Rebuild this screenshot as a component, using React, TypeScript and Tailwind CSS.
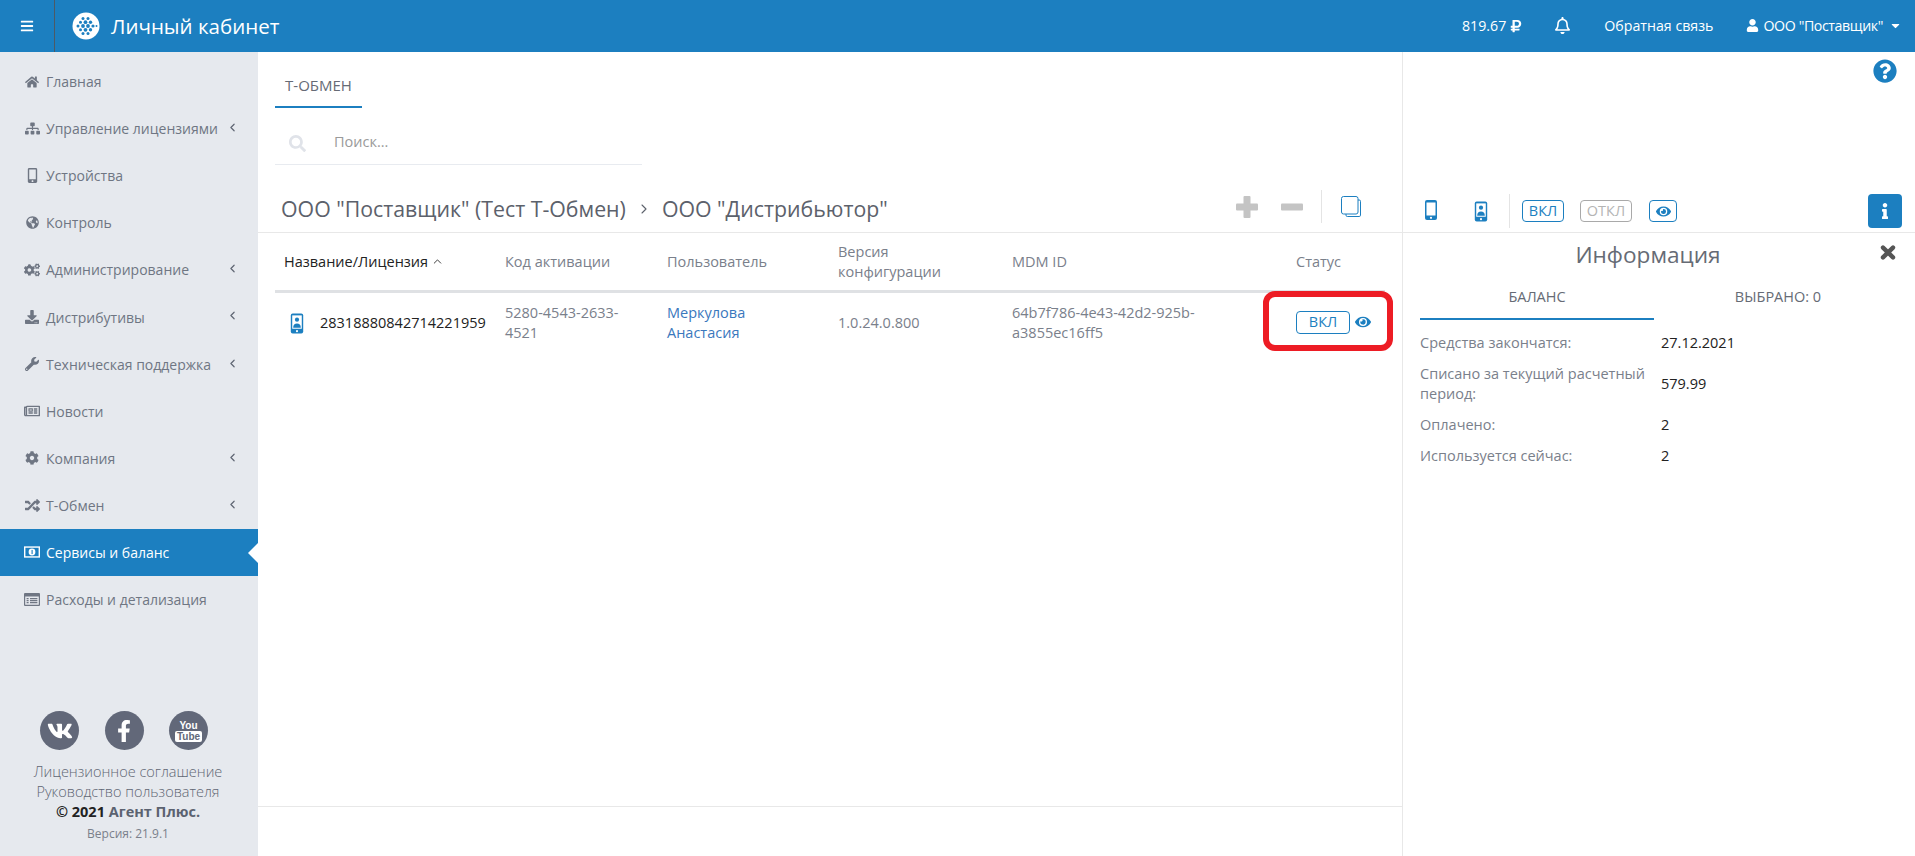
import type { ReactNode } from 'react';
import {
  FaBars, FaCaretDown, FaCog, FaCogs, FaDownload, FaEye, FaFacebookF,
  FaGlobeAmericas, FaHome, FaInfo, FaMobileAlt, FaQuestionCircle,
  FaRandom, FaRegBell, FaRegNewspaper, FaRubleSign, FaSearch, FaSitemap, FaUser, FaVk, FaWrench,
} from 'react-icons/fa';
import { ChevronLeft, ChevronRight, ChevronUp } from 'lucide-react';

type NavItem = { label: string; icon: ReactNode; sub?: boolean; active?: boolean };

function MoneyIcon() {
  return (
    <svg width="17" height="12" viewBox="0 0 17 12">
      <rect width="17" height="12" fill="#fff" />
      <rect x="1.5" y="1.5" width="14" height="9" fill="#1c7fc0" />
      <circle cx="8.5" cy="6" r="3.6" fill="#fff" />
      <rect x="8" y="3.8" width="1.2" height="4.4" fill="#1c7fc0" />
    </svg>
  );
}

function ListIcon() {
  return (
    <svg width="16" height="13" viewBox="0 0 16 13" fill="#6f7683">
      <path d="M1 0h14a1 1 0 0 1 1 1v11a1 1 0 0 1-1 1H1a1 1 0 0 1-1-1V1a1 1 0 0 1 1-1zm.2 3.4v8.4h13.6V3.4z" />
      <path d="M2.6 5h2v1.2h-2zM6 5h7.4v1.2H6zM2.6 7h2v1.2h-2zM6 7h7.4v1.2H6zM2.6 9h2v1.2h-2zM6 9h7.4v1.2H6z" />
    </svg>
  );
}

const NAV: NavItem[] = [
  { label: 'Главная', icon: <FaHome className="text-[14px]" /> },
  { label: 'Управление лицензиями', icon: <FaSitemap className="text-[15px]" />, sub: true },
  { label: 'Устройства', icon: <FaMobileAlt className="text-[15px]" /> },
  { label: 'Контроль', icon: <FaGlobeAmericas className="text-[13px]" /> },
  { label: 'Администрирование', icon: <FaCogs className="text-[16px]" />, sub: true },
  { label: 'Дистрибутивы', icon: <FaDownload className="text-[14px]" />, sub: true },
  { label: 'Техническая поддержка', icon: <FaWrench className="text-[14px]" />, sub: true },
  { label: 'Новости', icon: <FaRegNewspaper className="text-[16px]" /> },
  { label: 'Компания', icon: <FaCog className="text-[14px]" />, sub: true },
  { label: 'Т-Обмен', icon: <FaRandom className="text-[15px]" />, sub: true },
  { label: 'Сервисы и баланс', icon: <MoneyIcon />, active: true },
  { label: 'Расходы и детализация', icon: <ListIcon /> },
];

const BALANCE = [
  { label: 'Средства закончатся:', value: '27.12.2021' },
  { label: 'Списано за текущий расчетный период:', value: '579.99' },
  { label: 'Оплачено:', value: '2' },
  { label: 'Используется сейчас:', value: '2' },
];

// x, y, радиус точек логотипа
const LOGO_DOTS = [
  [11, 6.5, 1.5], [16, 6.5, 1.5],
  [8.5, 10.2, 1.5], [13.5, 10.2, 1.9], [18.5, 10.2, 1.7],
  [6, 14, 1.5], [11, 14, 1.9], [16, 14, 1.9], [21, 14, 1.6], [24.5, 14, 1],
  [8.5, 17.8, 1.5], [13.5, 17.8, 1.9], [18.5, 17.8, 1.7],
  [11, 21.5, 1.5], [16, 21.5, 1.5],
];

function Logo() {
  return (
    <svg width="28" height="28" viewBox="0 0 28 28">
      <circle cx="14" cy="14" r="13.5" fill="#fff" />
      {LOGO_DOTS.map(([x, y, r]) => (
        <circle key={`${x}-${y}`} cx={x} cy={y} r={r} fill="#1c7fc0" />
      ))}
    </svg>
  );
}

function UserPhone({ className }: { className?: string }) {
  return (
    <svg className={className} viewBox="0 0 14 22" fill="currentColor">
      <rect x="0.5" y="0.5" width="13" height="21" rx="2" />
      <rect x="2" y="2.5" width="10" height="14" fill="#fff" />
      <circle cx="7" cy="7" r="2.2" />
      <path d="M3 15.5c0-3 1.6-4.4 4-4.4s4 1.4 4 4.4z" />
      <circle cx="7" cy="19" r="1.1" fill="#fff" />
    </svg>
  );
}

function Phone({ className }: { className?: string }) {
  return (
    <svg className={className} viewBox="0 0 12 20" fill="currentColor">
      <rect x="0" y="0" width="12" height="20" rx="2" />
      <rect x="1.5" y="2.5" width="9" height="13" fill="#fff" />
      <circle cx="6" cy="17.8" r="1.1" fill="#fff" />
    </svg>
  );
}

function CopyIcon() {
  return (
    <svg width="20" height="21" viewBox="0 0 20 21" fill="none" stroke="#1c7fc0" strokeWidth="1">
      <path d="M17 4h1.2a1.3 1.3 0 0 1 1.3 1.3V19.2a1.3 1.3 0 0 1-1.3 1.3H6.3A1.3 1.3 0 0 1 5 19.2V18" />
      <rect x="0.5" y="0.5" width="16.5" height="17.5" rx="2" />
    </svg>
  );
}

function PlusIcon() {
  return (
    <svg width="22" height="22" viewBox="0 0 22 22" fill="#c4c4c4">
      <rect x="7.5" y="0" width="7" height="22" rx="1" />
      <rect x="0" y="7.5" width="22" height="7" rx="1" />
    </svg>
  );
}

function MinusIcon() {
  return (
    <svg width="22" height="22" viewBox="0 0 22 22" fill="#c4c4c4">
      <rect x="0" y="7.5" width="22" height="7" rx="1" />
    </svg>
  );
}

function CloseIcon({ className }: { className?: string }) {
  return (
    <svg className={className} width="16" height="15" viewBox="0 0 16 15" stroke="#555" strokeWidth="4.4" strokeLinecap="round">
      <path d="M3 2.6l10 9.8M13 2.6l-10 9.8" />
    </svg>
  );
}

function Sidebar() {
  return (
    <aside className="w-[258px] shrink-0 bg-[#e6e9ee] flex flex-col justify-between pt-[6px] pb-[12px]">
      <nav>
        {NAV.map((item) => (
          <div
            key={item.label}
            className={`relative h-[47.1px] flex items-center pl-[24px] text-[14px] ${
              item.active ? 'bg-[#1c7fc0] text-white' : 'text-[#6f7683]'
            }`}
          >
            <span className="w-[16px] flex justify-center mr-[6px]">{item.icon}</span>
            <span>{item.label}</span>
            {item.sub && <ChevronLeft size={13} strokeWidth={2.2} className="absolute left-[226px] top-[16px] text-[#5f6673]" />}
            {item.active && (
              <span className="absolute right-0 top-[14px] border-y-[10px] border-r-[10px] border-y-transparent border-r-white" />
            )}
          </div>
        ))}
      </nav>

      <div className="flex flex-col items-center pr-[2px] text-[14.5px] leading-[20px] text-[#5f6673] font-light">
        <div className="flex gap-[25.5px] mb-[12px] pr-[8px]">
          <span className="w-[39px] h-[39px] rounded-full bg-[#626879] text-white flex items-center justify-center">
            <FaVk className="text-[26px]" />
          </span>
          <span className="w-[39px] h-[39px] rounded-full bg-[#626879] text-white flex items-center justify-center">
            <FaFacebookF className="text-[22px]" />
          </span>
          <span className="w-[39px] h-[39px] rounded-full bg-[#626879] text-white flex flex-col items-center justify-center font-['Liberation_Sans_Narrow','Liberation_Sans',sans-serif] font-bold text-[10px] leading-[11px]">
            <span>You</span>
            <span className="bg-white text-[#626879] rounded-[2px] px-[2px]">Tube</span>
          </span>
        </div>
        <div>Лицензионное соглашение</div>
        <div>Руководство пользователя</div>
        <div className="font-bold text-[#5b6270]">
          <span className="text-[#222]">© 2021</span> Агент Плюс.
        </div>
        <div className="text-[12px] mt-[1px] leading-[21px] font-normal text-[#7a808b]">Версия: 21.9.1</div>
      </div>
    </aside>
  );
}

function LicenseTable() {
  const head = 'pl-[9px] text-[#7a808b]';
  const cell = 'pl-[9px] text-[#7a808b]';
  return (
    <div className="mx-[17px] text-[14.5px] leading-[20px]">
      <div className="grid grid-cols-[221px_162px_171px_174px_284px_1fr] items-center h-[60px] border-b-[3px] border-[#dfe1e4]">
        <div className="pl-[9px] text-[#222] flex items-center gap-[3px]">
          Название/Лицензия <ChevronUp size={13} strokeWidth={1.6} />
        </div>
        <div className={head}>Код активации</div>
        <div className={head}>Пользователь</div>
        <div className={head}>
          Версия
          <br />
          конфигурации
        </div>
        <div className={head}>MDM ID</div>
        <div className={head}>Статус</div>
      </div>
      <div className="grid grid-cols-[221px_162px_171px_174px_284px_1fr] items-center h-[60px]">
        <div className="pl-[15px] flex items-center gap-[16px] text-[#222]">
          <UserPhone className="w-[14px] h-[21px] text-[#1c7fc0]" />
          <span>28318880842714221959</span>
        </div>
        <div className={`${cell} pr-[30px]`}>5280-4543-2633-4521</div>
        <div className="pl-[9px] text-[#3a78bd] pr-[40px]">Меркулова Анастасия</div>
        <div className={cell}>1.0.24.0.800</div>
        <div className={`${cell} pr-[40px]`}>64b7f786-4e43-42d2-925b-a3855ec16ff5</div>
        <div className="pl-[9px] flex items-center gap-[5px] relative -top-[1px]">
          <span className="w-[54px] h-[23px] rounded-[4px] border border-[#1c7fc0] text-[#1c7fc0] flex items-center justify-center">
            ВКЛ
          </span>
          <FaEye className="text-[#1c7fc0] text-[16px]" />
        </div>
      </div>
    </div>
  );
}

function InfoPanel() {
  return (
    <aside className="w-[512px] shrink-0 flex flex-col text-[14.5px] leading-[20px]">
      <div className="h-[142px] flex justify-end pr-[18px] pt-[7px]">
        <FaQuestionCircle className="text-[#1c7fc0] text-[24px]" />
      </div>
      <div className="h-[39px] border-b border-[#e8e8e8] flex items-start text-[#1c7fc0]">
        <Phone className="w-[12px] h-[20px] ml-[22px] mt-[6px]" />
        <UserPhone className="w-[14px] h-[21px] ml-[37px] mt-[7px]" />
        <span className="w-px h-[34px] bg-[#e4e4e4] ml-[21px]" />
        <span className="ml-[12px] mt-[6px] w-[42px] h-[22px] rounded-[4px] border border-[#1c7fc0] flex items-center justify-center">
          ВКЛ
        </span>
        <span className="ml-[16px] mt-[6px] w-[52px] h-[22px] rounded-[4px] border border-[#a9a9a9] text-[#b4b4b4] flex items-center justify-center">
          ОТКЛ
        </span>
        <span className="ml-[17px] mt-[6px] w-[28px] h-[22px] rounded-[4px] border border-[#1c7fc0] flex items-center justify-center">
          <FaEye className="text-[15px]" />
        </span>
        <span className="ml-auto mr-[13px] w-[34px] h-[34px] rounded-[4px] bg-[#1c7fc0] text-white flex items-center justify-center">
          <FaInfo className="text-[16px]" />
        </span>
      </div>
      <div className="relative pt-[6px] pr-[22px] text-center text-[22.6px] leading-[32px] text-[#666b75]">
        Информация
        <CloseIcon className="absolute right-[19px] top-[12px]" />
      </div>
      <div className="ml-[17px] mr-[13px] mt-[16px] grid grid-cols-[234px_1fr] text-center text-[14.5px] text-[#666b75]">
        <div className="h-[33px] border-b-2 border-[#1c7fc0]">БАЛАНС</div>
        <div className="h-[33px]">ВЫБРАНО: 0</div>
      </div>
      <div className="mx-[17px] mt-[7px]">
        {BALANCE.map((row) => (
          <div key={row.label} className="grid grid-cols-[241px_1fr] items-center py-[5.5px]">
            <div className="text-[#7a808b] pr-[4px]">{row.label}</div>
            <div className="text-[#222]">{row.value}</div>
          </div>
        ))}
      </div>
    </aside>
  );
}

export default function App() {
  return (
    <div className="relative h-[856px] w-[1915px] overflow-hidden bg-white flex flex-col font-['Open_Sans',sans-serif]">
      <header className="h-[52px] shrink-0 bg-[#1c7fc0] text-white flex items-center text-[14.2px]">
        <div className="w-[55px] h-full border-r border-[#4c5a66] flex items-center justify-center">
          <FaBars className="text-[14px]" />
        </div>
        <span className="ml-[17px]">
          <Logo />
        </span>
        <span className="ml-[11px] text-[20.5px]">Личный кабинет</span>
        <div className="ml-auto flex items-center pr-[13px]">
          <span>819.67</span>
          <FaRubleSign className="text-[14px] ml-[3px]" />
          <FaRegBell className="text-[17px] ml-[31px]" />
          <span className="ml-[33px]">Обратная связь</span>
          <FaUser className="text-[13px] ml-[33px]" />
          <span className="ml-[4px] tracking-[-0.4px]">ООО "Поставщик"</span>
          <FaCaretDown className="text-[13px] ml-[6px]" />
        </div>
      </header>

      <div className="flex-1 flex min-h-0">
        <Sidebar />
        <main className="flex-1 min-w-0 flex flex-col border-r border-[#e8e8e8]">
          <div className="h-[56px] ml-[17px] w-[87px] border-b-2 border-[#1c7fc0] pt-[22px] text-center text-[15px] leading-[22px] text-[#666b75]">
            Т-ОБМЕН
          </div>
          <div className="h-[57px] ml-[17px] w-[367px] border-b border-[#e8ebf0] flex items-end pb-[12px] text-[14.5px] leading-[20px] text-[#9a9a9a]">
            <FaSearch className="text-[17px] text-[#e0e3e9] ml-[14px]" />
            <span className="ml-[28px]">Поиск...</span>
          </div>
          <div className="h-[68px] border-b border-[#e8e8e8] pt-[20px] pl-[23px] flex items-center text-[21.3px] text-[#5c616b]">
            <span>ООО "Поставщик" (Тест Т-Обмен)</span>
            <ChevronRight size={16} strokeWidth={1.6} className="mx-[10px]" />
            <span>ООО "Дистрибьютор"</span>
            <div className="ml-auto flex items-center pr-[41px] relative -top-[2px]">
              <PlusIcon />
              <span className="ml-[23px]">
                <MinusIcon />
              </span>
              <span className="w-px h-[33px] bg-[#e4e4e4] ml-[18px] mr-[19px]" />
              <CopyIcon />
            </div>
          </div>
          <LicenseTable />
          <div className="mt-auto h-[50px] border-t border-[#e8e8e8]" />
        </main>
        <InfoPanel />
      </div>

      {/* красная рамка-выделение поверх скриншота */}
      <div className="absolute left-[1263px] top-[291px] w-[130px] h-[60px] border-[6px] border-[#ed1c24] rounded-[12px]" />
    </div>
  );
}
